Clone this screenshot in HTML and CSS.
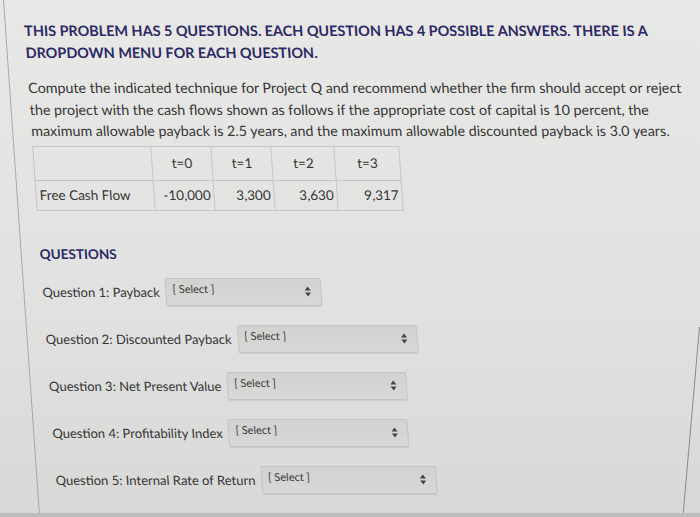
FILE: index.html
```html
<!DOCTYPE html>
<html lang="en">
<head>
   <meta charset="UTF-8">
   <meta name="viewport" content="width=device-width, initial-scale=1.0">
   <title>Quiz - Project Q</title>
   <link rel="stylesheet" href="styles.css">
</head>
<body>
   <div class="screen">
      <div class="page">
         <h2 class="intro">THIS PROBLEM HAS 5 QUESTIONS. EACH QUESTION HAS 4 POSSIBLE ANSWERS. THERE IS A DROPDOWN MENU FOR EACH QUESTION.</h2>
         <p class="problem">Compute the indicated technique for Project Q and recommend whether the firm should accept or reject the project with the cash flows shown as follows if the appropriate cost of capital is 10 percent, the maximum allowable payback is 2.5 years, and the maximum allowable discounted payback is 3.0 years.</p>

         <table class="flows">
            <colgroup>
               <col class="c-name">
               <col class="c-0">
               <col class="c-1">
               <col class="c-2">
               <col class="c-3">
            </colgroup>
            <tr class="head">
               <td class="name"></td>
               <td>t=0</td>
               <td>t=1</td>
               <td>t=2</td>
               <td>t=3</td>
            </tr>
            <tr class="data">
               <td class="name">Free Cash Flow</td>
               <td>-10,000</td>
               <td>3,300</td>
               <td>3,630</td>
               <td>9,317</td>
            </tr>
         </table>

         <h4 class="questions-title">QUESTIONS</h4>

         <div class="questions">
            <div class="question q1">
               <span class="label">Question 1: Payback</span>
               <div class="select">
                  <span>[ Select ]</span>
                  <svg width="7" height="11" viewBox="0 0 7 11"><path d="M3.5 0.5 L6.5 4.5 L0.5 4.5 Z M3.5 10.5 L6.5 6.5 L0.5 6.5 Z" fill="#444"/></svg>
               </div>
            </div>
            <div class="question q2">
               <span class="label">Question 2: Discounted Payback</span>
               <div class="select">
                  <span>[ Select ]</span>
                  <svg width="7" height="11" viewBox="0 0 7 11"><path d="M3.5 0.5 L6.5 4.5 L0.5 4.5 Z M3.5 10.5 L6.5 6.5 L0.5 6.5 Z" fill="#444"/></svg>
               </div>
            </div>
            <div class="question q3">
               <span class="label">Question 3: Net Present Value</span>
               <div class="select">
                  <span>[ Select ]</span>
                  <svg width="7" height="11" viewBox="0 0 7 11"><path d="M3.5 0.5 L6.5 4.5 L0.5 4.5 Z M3.5 10.5 L6.5 6.5 L0.5 6.5 Z" fill="#444"/></svg>
               </div>
            </div>
            <div class="question q4">
               <span class="label">Question 4: Profitability Index</span>
               <div class="select">
                  <span>[ Select ]</span>
                  <svg width="7" height="11" viewBox="0 0 7 11"><path d="M3.5 0.5 L6.5 4.5 L0.5 4.5 Z M3.5 10.5 L6.5 6.5 L0.5 6.5 Z" fill="#444"/></svg>
               </div>
            </div>
            <div class="question q5">
               <span class="label">Question 5: Internal Rate of Return</span>
               <div class="select">
                  <span>[ Select ]</span>
                  <svg width="7" height="11" viewBox="0 0 7 11"><path d="M3.5 0.5 L6.5 4.5 L0.5 4.5 Z M3.5 10.5 L6.5 6.5 L0.5 6.5 Z" fill="#444"/></svg>
               </div>
            </div>
         </div>
      </div>
      <div class="frame-edge"></div>
      <div class="bottom-edge"></div>
   </div>
</body>
</html>
```

FILE: styles.css
```css
html, body {
   margin: 0;
   padding: 0;
}

body {
   width: 700px;
   height: 517px;
   overflow: hidden;
   font-family: Lato, 'Open Sans', sans-serif;
   color: #363636;
   background: linear-gradient(180deg, #e8e8e6 0%, #e1e1e0 60%, #d8d8d7 100%);
}

.screen {
   position: relative;
   width: 700px;
   height: 517px;
   overflow: hidden;
}

/* photo is taken at an angle, so the whole page leans */
.page {
   height: 540px;
   margin-left: 3px;
   padding: 20px 0 0 18px;
   border-left: 1px solid #a9a9a7;
   transform: skewX(4deg);
   transform-origin: 0 0;
}

.intro {
   margin: 0;
   font-size: 14.4px;
   font-weight: 700;
   line-height: 22px;
   color: #2b2866;
   width: 650px;
}

.problem {
   margin: 13px 0 0 0;
   width: 665px;
   font-size: 14.3px;
   line-height: 21.5px;
}

.flows {
   margin-top: 4px;
   border-collapse: collapse;
   table-layout: fixed;
   width: 366px;
   border: 1px solid #8d8d8b;
   font-size: 13.5px;
}

.c-name { width: 118px; }
.c-0 { width: 60px; }
.c-1 { width: 60px; }
.c-2 { width: 63px; }
.c-3 { width: 65px; }

.flows td {
   border: 1px solid #c6c6c4;
   padding: 0 3px;
}

.flows .head td {
   height: 33px;
   text-align: center;
   vertical-align: middle;
}

.flows .data td {
   height: 29px;
   text-align: right;
   vertical-align: middle;
}

.flows td.name {
   text-align: left;
}

.questions-title {
   margin: 35px 0 0 0;
   font-size: 13.5px;
   font-weight: 700;
   color: #2b2866;
}

.questions {
   display: flex;
   flex-direction: column;
   gap: 19px;
   margin-top: 16px;
}

.question {
   display: flex;
   align-items: center;
   gap: 6px;
   font-size: 13px;
}

.select {
   display: flex;
   align-items: center;
   justify-content: space-between;
   height: 28px;
   padding: 0 9px 0 6px;
   box-sizing: border-box;
   background: linear-gradient(180deg, #d2d2d1, #d8d8d7);
   border: 1px solid #c4c4c3;
   border-radius: 2px;
   box-shadow: 0 1px 1px rgba(0, 0, 0, 0.08);
}

.select span {
   font-size: 11px;
   color: #3c3c3c;
   margin-top: -6px;
}

.q1 .select { width: 156px; }
.q2 .select { width: 180px; }
.q3 .select { width: 180px; }
.q4 .select { width: 180px; }
.q5 .select { width: 175px; }

.frame-edge {
   position: absolute;
   left: 699px;
   top: 327px;
   width: 1px;
   height: 200px;
   background: #8a8a88;
   transform: rotate(5deg);
   transform-origin: 0 0;
}

.bottom-edge {
   position: absolute;
   left: 0;
   bottom: 0;
   width: 700px;
   height: 4px;
   background: #bdbdbb;
}
```
